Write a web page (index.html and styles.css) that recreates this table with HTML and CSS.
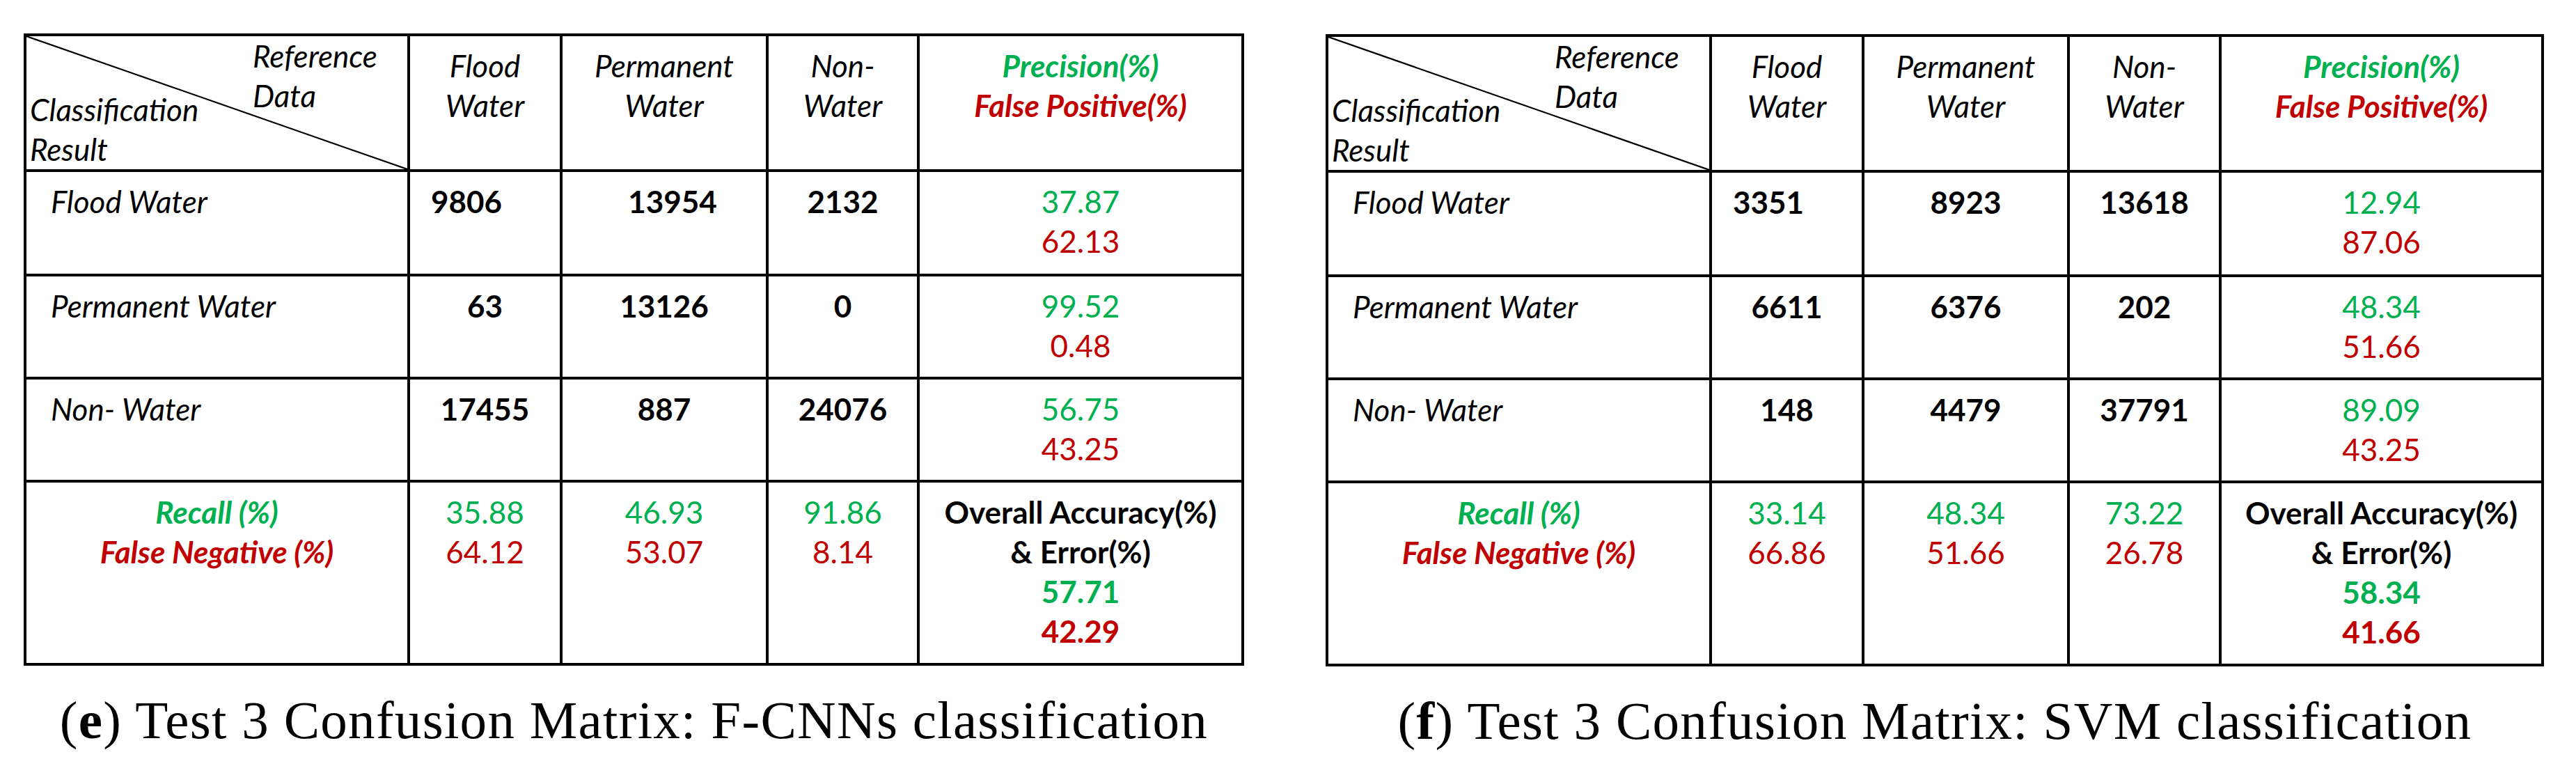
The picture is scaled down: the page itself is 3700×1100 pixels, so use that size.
FILE: index.html
```html
<!DOCTYPE html>
<html lang="en">
<head>
<meta charset="utf-8">
<title>Test 3 Confusion Matrices</title>
<link rel="stylesheet" href="styles.css">
</head>
<body>
<div class="page">
  <figure class="panel">
    <div class="matrix">
      <div class="cell corner">
        <svg class="diag" viewBox="0 0 100 100" preserveAspectRatio="none"><line x1="0" y1="0" x2="100" y2="100"/></svg>
        <div class="ref">Reference<br>Data</div>
        <div class="cls">Classification<br>Result</div>
      </div>
      <div class="cell head">Flood<br>Water</div>
      <div class="cell head">Permanent<br>Water</div>
      <div class="cell head">Non-<br>Water</div>
      <div class="cell metric"><span class="g">Precision(%)</span><br><span class="r">False Positive(%)</span></div>

      <div class="cell label">Flood Water</div>
      <div class="cell count shift-l">9806</div>
      <div class="cell count shift-r">13954</div>
      <div class="cell count">2132</div>
      <div class="cell"><span class="g">37.87</span><br><span class="r">62.13</span></div>

      <div class="cell label">Permanent Water</div>
      <div class="cell count">63</div>
      <div class="cell count">13126</div>
      <div class="cell count">0</div>
      <div class="cell"><span class="g">99.52</span><br><span class="r">0.48</span></div>

      <div class="cell label">Non- Water</div>
      <div class="cell count">17455</div>
      <div class="cell count">887</div>
      <div class="cell count">24076</div>
      <div class="cell"><span class="g">56.75</span><br><span class="r">43.25</span></div>

      <div class="cell metric"><span class="g">Recall (%)</span><br><span class="r">False Negative (%)</span></div>
      <div class="cell"><span class="g">35.88</span><br><span class="r">64.12</span></div>
      <div class="cell"><span class="g">46.93</span><br><span class="r">53.07</span></div>
      <div class="cell"><span class="g">91.86</span><br><span class="r">8.14</span></div>
      <div class="cell overall">Overall Accuracy(%)<br>&amp; Error(%)<br><span class="g">57.71</span><br><span class="r">42.29</span></div>
    </div>
    <figcaption>(<b>e</b>) Test 3 Confusion Matrix: F-CNNs classification</figcaption>
  </figure>

  <figure class="panel panel-svm">
    <div class="matrix matrix-svm">
      <div class="cell corner">
        <svg class="diag" viewBox="0 0 100 100" preserveAspectRatio="none"><line x1="0" y1="0" x2="100" y2="100"/></svg>
        <div class="ref">Reference<br>Data</div>
        <div class="cls">Classification<br>Result</div>
      </div>
      <div class="cell head">Flood<br>Water</div>
      <div class="cell head">Permanent<br>Water</div>
      <div class="cell head">Non-<br>Water</div>
      <div class="cell metric"><span class="g">Precision(%)</span><br><span class="r">False Positive(%)</span></div>

      <div class="cell label">Flood Water</div>
      <div class="cell count shift-l">3351</div>
      <div class="cell count">8923</div>
      <div class="cell count">13618</div>
      <div class="cell"><span class="g">12.94</span><br><span class="r">87.06</span></div>

      <div class="cell label">Permanent Water</div>
      <div class="cell count">6611</div>
      <div class="cell count">6376</div>
      <div class="cell count">202</div>
      <div class="cell"><span class="g">48.34</span><br><span class="r">51.66</span></div>

      <div class="cell label">Non- Water</div>
      <div class="cell count">148</div>
      <div class="cell count">4479</div>
      <div class="cell count">37791</div>
      <div class="cell"><span class="g">89.09</span><br><span class="r">43.25</span></div>

      <div class="cell metric"><span class="g">Recall (%)</span><br><span class="r">False Negative (%)</span></div>
      <div class="cell"><span class="g">33.14</span><br><span class="r">66.86</span></div>
      <div class="cell"><span class="g">48.34</span><br><span class="r">51.66</span></div>
      <div class="cell"><span class="g">73.22</span><br><span class="r">26.78</span></div>
      <div class="cell overall">Overall Accuracy(%)<br>&amp; Error(%)<br><span class="g">58.34</span><br><span class="r">41.66</span></div>
    </div>
    <figcaption>(<b>f</b>) Test 3 Confusion Matrix: SVM classification</figcaption>
  </figure>
</div>
</body>
</html>
```

FILE: styles.css
```css
html, body {
  margin: 0;
  background: #ffffff;
}

.page {
  display: flex;
  align-items: flex-start;
  gap: 117px;
  padding: 48px 0 0 34px;
}

.panel {
  margin: 0;
  display: flex;
  flex-direction: column;
  align-items: center;
}

.panel-svm {
  padding-top: 1px;
}

.matrix {
  display: grid;
  grid-template-columns: 551px 219px 296px 217px 466px;
  grid-template-rows: 195px 150px 148px 148px 263px;
  border-left: 4px solid #000;
  border-top: 4px solid #000;
  font-family: Lato, "Noto Sans", sans-serif;
  font-size: 44px;
  line-height: 57px;
  color: #000;
}

.matrix-svm {
  grid-template-columns: 551px 219px 295px 218px 463px;
}

.cell {
  box-sizing: border-box;
  border-right: 4px solid #000;
  border-bottom: 4px solid #000;
  padding-top: 14px;
  text-align: center;
  white-space: nowrap;
}

.head {
  font-style: italic;
}

.label {
  font-style: italic;
  text-align: left;
  padding-left: 35px;
}

.count {
  font-weight: 700;
}

.shift-l {
  padding-right: 53px;
}

.shift-r {
  padding-left: 24px;
}

.metric {
  font-style: italic;
  font-weight: 700;
}

.overall {
  font-weight: 700;
}

.g {
  color: #00b050;
}

.r {
  color: #c00000;
}

.corner {
  position: relative;
  display: grid;
  padding: 0;
  text-align: left;
  font-style: italic;
}

.corner .ref,
.corner .cls {
  grid-area: 1 / 1;
}

.ref {
  align-self: start;
  margin-left: 325px;
}

.cls {
  align-self: end;
  margin-left: 5px;
}

.diag {
  position: absolute;
  left: 0;
  top: 0;
  width: 100%;
  height: 100%;
}

.diag line {
  stroke: #000;
  stroke-width: 2.2px;
  vector-effect: non-scaling-stroke;
}

figcaption {
  margin-top: 33px;
  font-family: "Liberation Serif", "Times New Roman", serif;
  font-size: 77px;
  line-height: 90px;
  letter-spacing: 1.3px;
  color: #000;
  white-space: nowrap;
}

figcaption b {
  font-weight: 700;
}
```
